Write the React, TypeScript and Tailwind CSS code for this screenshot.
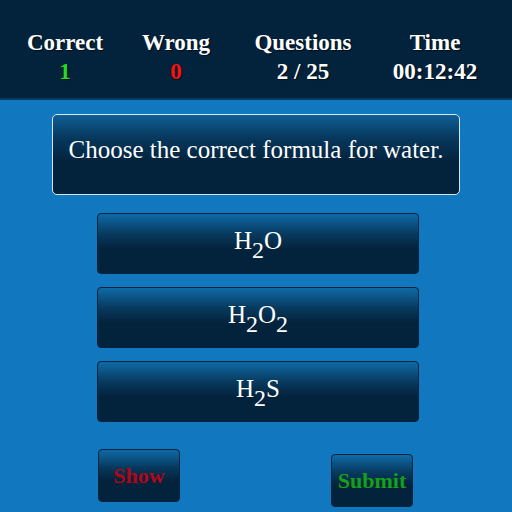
const serif = { fontFamily: '"Liberation Serif", "Times New Roman", serif' };

const stats = [
  { label: "Correct", value: "1", color: "text-[#22dd22]" },
  { label: "Wrong", value: "0", color: "text-[#ff1010]" },
  { label: "Questions", value: "2 / 25", color: "text-white" },
  { label: "Time", value: "00:12:42", color: "text-white" },
];

const Sub = ({ n }: { n: string }) => (
  <span className="relative top-[9px] text-[24px]">{n}</span>
);

const answers = [
  <>H<Sub n="2" />O</>,
  <>H<Sub n="2" />O<Sub n="2" /></>,
  <>H<Sub n="2" />S</>,
];

const btn =
  "bg-[linear-gradient(to_bottom,#0f6aa6_0%,#07385c_35%,#03223b_60%,#03223b_100%)] border border-[#02243d] rounded-[4px]";

export default function App() {
  return (
    <div className="w-[512px] h-[512px] bg-[#1177bf] overflow-hidden" style={serif}>
      {/* header */}
      <div className="h-[100px] bg-[#03223b] border-b-2 border-[#0b3b5f]">
        <div className="grid grid-cols-[130px_92px_162px_102px] pt-[28px] [text-shadow:1px_1px_1px_rgba(0,0,0,0.6)]">
          {stats.map((s) => (
            <div key={s.label} className="flex flex-col items-center font-bold text-[23px] leading-[29px]">
              <span className="text-white">{s.label}</span>
              <span className={s.color}>{s.value}</span>
            </div>
          ))}
        </div>
      </div>

      {/* question */}
      <div className="px-[52px] pt-[14px]">
        <div className="h-[81px] rounded-[5px] border border-[#d7e6f2] bg-[linear-gradient(to_bottom,#0f5f95_0%,#07375c_30%,#03223b_60%,#03223b_100%)] pt-[20px] text-center text-white text-[25px] leading-[30px]">
          Choose the correct formula for water.
        </div>
      </div>

      {/* answers */}
      <div className="flex flex-col gap-[13px] pl-[97px] pt-[18px]">
        {answers.map((a, i) => (
          <button key={i} className={`w-[322px] h-[61px] ${btn} text-white text-[25px] leading-[28px] pb-[5px]`}>
            {a}
          </button>
        ))}
      </div>

      {/* actions */}
      <div className="flex items-start pl-[98px] pt-[27px]">
        <button className={`w-[82px] h-[53px] ${btn} font-bold text-[22px] text-[#b0061a]`}>Show</button>
        <button className={`ml-[151px] mt-[5px] w-[82px] h-[53px] ${btn} font-bold text-[22px] text-[#14a11a]`}>Submit</button>
      </div>
    </div>
  );
}
